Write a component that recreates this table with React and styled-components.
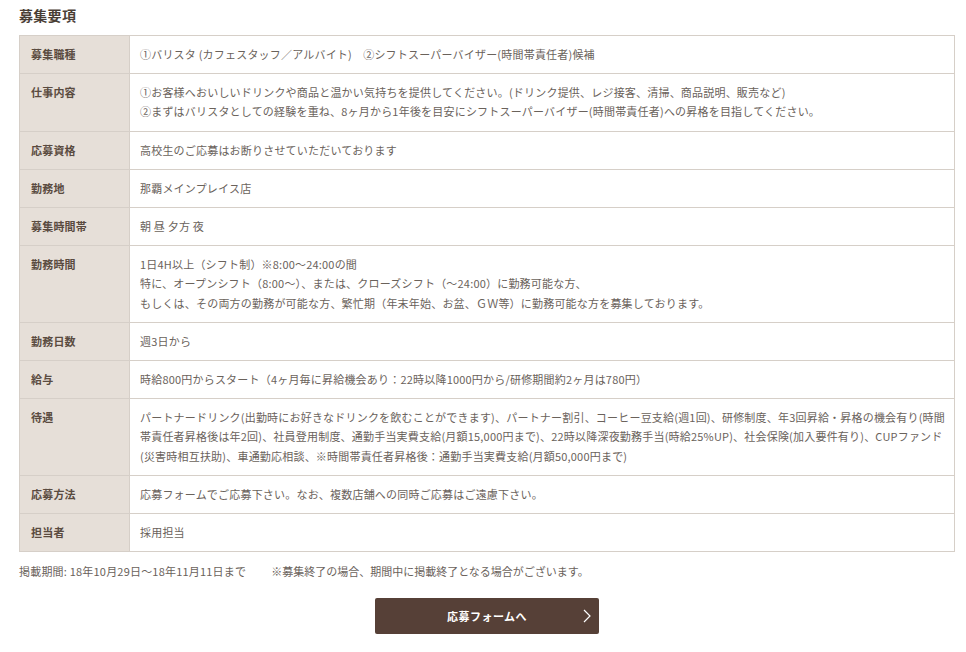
import React from 'react';
import styled, { createGlobalStyle } from 'styled-components';

const GlobalStyle = createGlobalStyle`
  html, body {
    margin: 0;
    padding: 0;
    background: #fff;
  }
  body {
    font-family: "Noto Sans CJK JP", "Noto Sans", sans-serif;
    color: #6a625b;
  }
`;

const Page = styled.div`
  width: 936px;
  padding: 5px 0 18px 19px;
`;

const Title = styled.h2`
  margin: 0 0 9px;
  font-size: 14px;
  line-height: 21px;
  font-weight: 700;
  color: #4a3e35;
  letter-spacing: 0.3px;
`;

const Table = styled.table`
  width: 100%;
  border-collapse: collapse;
  border: 1px solid #d6cfc8;
  font-size: 11px;
  line-height: 19.2px;
`;

const Row = styled.tr`
  border-bottom: 1px solid #d6cfc8;
`;

const Label = styled.th`
  width: 88px;
  padding: 9px 10px 9px 11px;
  background: #e6dfd8;
  border-right: 1px solid #d6cfc8;
  text-align: left;
  vertical-align: top;
  font-weight: 700;
  color: #5a4b40;
  letter-spacing: 0.2px;
`;

const Cell = styled.td`
  padding: 9px 4px 9px 10px;
  vertical-align: top;
  color: #6a625b;
  letter-spacing: 0.2px;
`;

const Note = styled.p`
  display: flex;
  gap: 25px;
  margin: 10px 0 0;
  font-size: 11px;
  line-height: 19px;
  color: #6a625b;
  span:first-child {
    letter-spacing: 0.2px;
  }
`;

const ButtonWrap = styled.div`
  display: flex;
  justify-content: center;
  margin-top: 17px;
`;

const ApplyButton = styled.a`
  position: relative;
  display: flex;
  align-items: center;
  justify-content: center;
  width: 224px;
  height: 36px;
  background: #564037;
  border-radius: 2px;
  color: #fff;
  font-size: 11px;
  font-weight: 700;
  letter-spacing: 0.5px;
  text-decoration: none;
  svg {
    position: absolute;
    right: 8px;
    top: 11px;
  }
`;

const rows = [
  ['募集職種', ['①バリスタ (カフェスタッフ／アルバイト)　②シフトスーパーバイザー(時間帯責任者)候補']],
  [
    '仕事内容',
    [
      '①お客様へおいしいドリンクや商品と温かい気持ちを提供してください。(ドリンク提供、レジ接客、清掃、商品説明、販売など)',
      '②まずはバリスタとしての経験を重ね、8ヶ月から1年後を目安にシフトスーパーバイザー(時間帯責任者)への昇格を目指してください。',
    ],
  ],
  ['応募資格', ['高校生のご応募はお断りさせていただいております']],
  ['勤務地', ['那覇メインプレイス店']],
  ['募集時間帯', ['朝 昼 夕方 夜']],
  [
    '勤務時間',
    [
      '1日4H以上（シフト制）※8:00～24:00の間',
      '特に、オープンシフト（8:00～）、または、クローズシフト（～24:00）に勤務可能な方、',
      'もしくは、その両方の勤務が可能な方、繁忙期（年末年始、お盆、ＧＷ等）に勤務可能な方を募集しております。',
    ],
  ],
  ['勤務日数', ['週3日から']],
  ['給与', ['時給800円からスタート（4ヶ月毎に昇給機会あり：22時以降1000円から/研修期間約2ヶ月は780円）']],
  [
    '待遇',
    [
      'パートナードリンク(出勤時にお好きなドリンクを飲むことができます)、パートナー割引、コーヒー豆支給(週1回)、研修制度、年3回昇給・昇格の機会有り(時間帯責任者昇格後は年2回)、社員登用制度、通勤手当実費支給(月額15,000円まで)、22時以降深夜勤務手当(時給25%UP)、社会保険(加入要件有り)、CUPファンド(災害時相互扶助)、車通勤応相談、※時間帯責任者昇格後：通勤手当実費支給(月額50,000円まで)',
    ],
  ],
  ['応募方法', ['応募フォームでご応募下さい。なお、複数店舗への同時ご応募はご遠慮下さい。']],
  ['担当者', ['採用担当']],
];

const App = () => (
  <>
    <GlobalStyle />
    <Page>
      <Title>募集要項</Title>
      <Table>
        <tbody>
          {rows.map(([label, lines]) => (
            <Row key={label}>
              <Label>{label}</Label>
              <Cell>
                {lines.map((line, i) => (
                  <React.Fragment key={i}>
                    {i > 0 && <br />}
                    {line}
                  </React.Fragment>
                ))}
              </Cell>
            </Row>
          ))}
        </tbody>
      </Table>
      <Note>
        <span>掲載期間: 18年10月29日〜18年11月11日まで</span>
        <span>※募集終了の場合、期間中に掲載終了となる場合がございます。</span>
      </Note>
      <ButtonWrap>
        <ApplyButton href="#">
          応募フォームへ
          <svg width="8" height="14" viewBox="0 0 8 14" fill="none">
            <path d="M1 1l6 6-6 6" stroke="#fff" strokeWidth="1.2" />
          </svg>
        </ApplyButton>
      </ButtonWrap>
    </Page>
  </>
);

export default App;
